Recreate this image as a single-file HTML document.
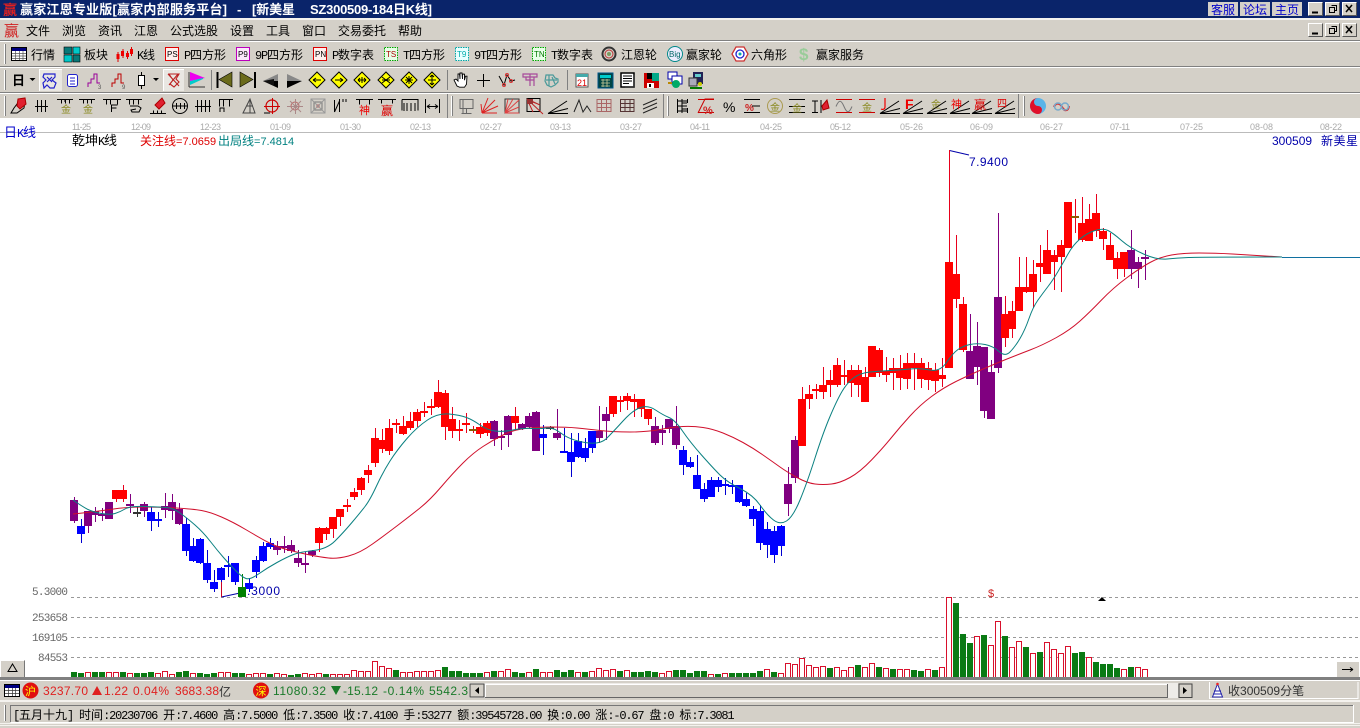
<!DOCTYPE html>
<html lang="zh"><head><meta charset="utf-8"><title>赢家江恩专业版</title>
<style>
html,body{margin:0;padding:0;background:#fff;overflow:hidden}
svg{display:block}
text{font-family:"Liberation Sans","WenQuanYi Zen Hei","Noto Sans CJK SC",sans-serif;font-size:12px;fill:#000;white-space:pre}
.l{font-family:"Liberation Mono",monospace;font-size:12px;letter-spacing:-1.2px}
.s{font-family:"Liberation Sans",sans-serif;font-size:11px}
.n{font-family:"Liberation Sans",sans-serif;font-size:12px}
.d{font-family:"Liberation Sans",sans-serif;font-size:9px;fill:#aaa}
.t{font-size:13px;font-weight:bold;fill:#fff}
.b{fill:#00c}
.v{font-family:"Liberation Mono",monospace;font-size:11px;fill:#666}
.i{font-family:"Liberation Sans",sans-serif;font-size:8px}
</style></head><body>
<svg width="1360" height="728" viewBox="0 0 1360 728" xmlns="http://www.w3.org/2000/svg" xmlns:xlink="http://www.w3.org/1999/xlink">
<defs>
<g id="fan" fill="none" stroke="#000"><path d="M-10 7.500H10M-10 7.500L9-5M-10 7.500L10 2.500"/></g>
<g id="dia"><path d="M0-8L8 0L0 8L-8 0Z" fill="#ff0" stroke="#000"/></g>
<g id="btn"><rect width="15" height="14" fill="#d4d0c8"/><path d="M.5 13.500V.5H14.500" stroke="#fff" fill="none"/><path d="M.5 13.500H14.500V.5" stroke="#555" fill="none"/></g>
</defs>
<rect width="1360" height="728" fill="#d4d0c8"/>
<!-- title bar -->
<rect width="1360" height="18" fill="#0a246a"/>
<rect y="18" width="1360" height="2" fill="#f4f2ee"/>
<rect x="3" y="2" width="14" height="14" fill="#0a246a"/>
<text x="3" y="15" style="font-size:14px;fill:#e02020;font-weight:bold">赢</text>
<text x="20" y="14" class="t" textLength="207">赢家江恩专业版[赢家内部服务平台]</text>
<text x="237" y="14" class="t">-</text>
<text x="252" y="14" class="t" textLength="43">[新美星</text>
<text x="310" y="14" class="t" textLength="122">SZ300509-184日K线]</text>
<g>
<rect x="1208" y="2" width="30" height="14" fill="#d4d0c8"/><rect x="1240" y="2" width="30" height="14" fill="#d4d0c8"/><rect x="1272" y="2" width="30" height="14" fill="#d4d0c8"/>
<text x="1211" y="14" class="b">客服</text><text x="1243" y="14" class="b">论坛</text><text x="1275" y="14" class="b">主页</text>
</g>
<g id="winb"><use xlink:href="#btn" x="1308" y="2"/><use xlink:href="#btn" x="1325" y="2"/><use xlink:href="#btn" x="1342" y="2"/>
<path d="M1312 12.500h6" stroke="#000" stroke-width="2"/><path d="M1331.500 5.500h5v5h-2M1329.500 7.500h5v5h-5z" fill="none" stroke="#000"/><path d="M1346 5l6 7M1352 5l-6 7" stroke="#000" stroke-width="1.500"/></g>
<use xlink:href="#winb" y="21"/>
<!-- menu -->
<text x="4" y="36" style="font-size:15px;fill:#d02020">赢</text>
<text x="26" y="35">文件</text><text x="62" y="35">浏览</text><text x="98" y="35">资讯</text><text x="134" y="35">江恩</text><text x="170" y="35">公式选股</text><text x="230" y="35">设置</text><text x="266" y="35">工具</text><text x="302" y="35">窗口</text><text x="338" y="35">交易委托</text><text x="398" y="35">帮助</text>
<!-- separators -->
<g fill="#808080"><rect y="40" width="1360" height="1"/><rect y="66" width="1360" height="1"/><rect y="92" width="1360" height="1"/></g>
<g fill="#fff"><rect y="41" width="1360" height="1"/><rect y="67" width="1360" height="1"/><rect y="93" width="1360" height="1"/></g>
<g fill="#fff"><rect x="4" y="44" width="1" height="20"/><rect x="4" y="70" width="1" height="20"/><rect x="4" y="96" width="1" height="20"/><rect x="451" y="96" width="1" height="20"/><rect x="667" y="96" width="1" height="20"/><rect x="1023" y="96" width="1" height="20"/></g>
<g fill="#808080"><rect x="5" y="44" width="1" height="20"/><rect x="5" y="70" width="1" height="20"/><rect x="5" y="96" width="1" height="20"/><rect x="452" y="96" width="1" height="20"/><rect x="668" y="96" width="1" height="20"/><rect x="1024" y="96" width="1" height="20"/><rect x="211" y="70" width="1" height="20"/><rect x="447" y="70" width="1" height="20"/><rect x="567" y="70" width="1" height="20"/><rect x="447" y="94" width="1" height="24"/><rect x="663" y="94" width="1" height="24"/><rect x="1018" y="94" width="1" height="24"/></g>
<!-- toolbar 2 -->
<rect x="11.500" y="47.500" width="15" height="13" fill="#fff" stroke="#000"/><rect x="12" y="48" width="14" height="3" fill="#000080"/><path d="M12 53.500h14M12 56h14M12 58.500h14M15.500 51v9M19.500 51v9M23 51v9" stroke="#555" stroke-width=".7"/>
<text x="31" y="59">行情</text>
<g stroke="#000" stroke-width=".6"><rect x="64" y="47" width="8" height="7" fill="#087878"/><rect x="73" y="47" width="7" height="7" fill="#00c8c8"/><rect x="64" y="55" width="8" height="7" fill="#00c8c8"/><rect x="73" y="55" width="7" height="7" fill="#087878"/></g>
<text x="84" y="59">板块</text>
<path d="M118 52v10M123 49v9M127.500 51v8M131.500 47v9" stroke="#d00" /><path d="M116.500 54h3v5h-3zM121 51h3v5h-3zM126 53h3v4h-3zM130 49h3v5h-3z" fill="#e00"/>
<text x="137" y="59"><tspan class="l">K</tspan>线</text>
<g fill="#fff0ee"><rect x="165.500" y="47.500" width="13" height="13" stroke="#d00"/><rect x="236.500" y="47.500" width="13" height="13" stroke="#b0b" fill="#fbe8fb"/><rect x="313.500" y="47.500" width="13" height="13" stroke="#d00"/><rect x="384.500" y="47.500" width="13" height="13" stroke="#0a0" stroke-dasharray="1.500 1" fill="#e8ffe8"/><rect x="455.500" y="47.500" width="13" height="13" stroke="#0aa" stroke-dasharray="1.500 1" fill="#e8ffff"/><rect x="532.500" y="47.500" width="13" height="13" stroke="#0a0" stroke-dasharray="1.500 1" fill="#e8ffe8"/></g>
<text x="167" y="57" class="i">PS</text><text x="238" y="57" class="i">P9</text><text x="315" y="57" class="i">PN</text><text x="386" y="57" class="i" style="fill:#a00">TS</text><text x="457" y="57" class="i" style="fill:#0aa">T9</text><text x="534" y="57" class="i" style="fill:#070">TN</text>
<text x="184" y="59"><tspan class="l">P</tspan>四方形</text>
<text x="255" y="59"><tspan class="l">9P</tspan>四方形</text>
<text x="332" y="59"><tspan class="l">P</tspan>数字表</text>
<text x="403" y="59"><tspan class="l">T</tspan>四方形</text>
<text x="474" y="59"><tspan class="l">9T</tspan>四方形</text>
<text x="551" y="59"><tspan class="l">T</tspan>数字表</text>
<circle cx="609" cy="54" r="6.500" fill="none" stroke="#333" stroke-width="2"/><circle cx="609" cy="54" r="4" fill="none" stroke="#b33"/><circle cx="609" cy="54" r="2" fill="#7a9a60"/>
<text x="621" y="59">江恩轮</text>
<circle cx="675" cy="54" r="7.500" fill="#eef" stroke="#088"/><text x="669" y="57" class="i" style="fill:#066">Big</text>
<text x="686" y="59">赢家轮</text>
<path d="M736 47h8l4 7l-4 7h-8l-4-7z" fill="#fff" stroke="#c33" stroke-width="1.300"/><circle cx="740" cy="54" r="4" fill="none" stroke="#22c" stroke-width="1.300"/><circle cx="740" cy="54" r="1.500" fill="#0aa"/>
<text x="751" y="59">六角形</text>
<text x="799" y="60" style="font-size:17px;font-weight:bold;fill:#9c9;font-family:'Liberation Sans',sans-serif">$</text>
<text x="816" y="59">赢家服务</text>
<!-- toolbar 3 -->
<text x="12" y="85" style="font-size:13px;font-weight:bold">日</text>
<path d="M29.500 78h6l-3 3zM153 78h6l-3 3z" fill="#000"/>
<rect x="39" y="69" width="23" height="22" fill="#e9e7e2"/><path d="M39.500 91V69.500H62" stroke="#fff" fill="none"/>
<path d="M44 74h11v3l-3 3 4 3-2 5h-4l-3-3-3 3-1-5 3-3-3-3z M47 77l5 5M52 77l-5 5" fill="none" stroke="#22c" stroke-width="1.200"/>
<rect x="67.500" y="74.500" width="10" height="12" rx="2" fill="#fff" stroke="#22c"/><path d="M70 78h5M70 81h5M70 84h5" stroke="#22c"/>
<path d="M88 87v-4h3v-4h3v-5h3v9h3" fill="none" stroke="#909" /><text x="98" y="89" class="i" style="font-size:6px;fill:#555">3</text>
<path d="M112 87v-4h3v-4h3v-5h3v9h3" fill="none" stroke="#b00"/><text x="122" y="89" class="i" style="font-size:6px;fill:#555">9</text>
<path d="M141.500 72v4M141.500 85v4" stroke="#000"/><rect x="138.500" y="75.500" width="6" height="10" fill="#fff" stroke="#000"/>
<rect x="163" y="69" width="21" height="22" fill="#e9e7e2"/><path d="M163.500 91V69.500H184" stroke="#fff" fill="none"/>
<path d="M168 74l11 12M178 74l-9 11M169 74h10l-3 5 3 3-5 5-4-3 3-4z" fill="none" stroke="#b22" stroke-width="1.100"/>
<path d="M189 72v15M189 87h16" stroke="#333"/><path d="M190 72l15 6l-15 3z" fill="#e0e"/><path d="M190 81l13-3v1l-13 6z" fill="#0cc"/>
<path d="M217.500 72v16" stroke="#000" stroke-width="2"/><path d="M232 72v15l-13-7.500z" fill="#6b6b1c" stroke="#000" stroke-width=".6"/>
<path d="M255 72v16" stroke="#000" stroke-width="2"/><path d="M240 72v15l13-7.500z" fill="#6b6b1c" stroke="#000" stroke-width=".6"/>
<path d="M263 81l15-7v7z" fill="#888"/><path d="M263 81l15 7v-7z" fill="#000"/><path d="M263 81l11-2v7z" fill="#111"/>
<path d="M302 81l-15-7v7z" fill="#888"/><path d="M302 81l-15 7v-7z" fill="#000"/>
<g stroke="#000" fill="none"><use xlink:href="#dia" x="317" y="80"/><use xlink:href="#dia" x="339" y="80"/><use xlink:href="#dia" x="362" y="80"/><use xlink:href="#dia" x="386" y="80"/><use xlink:href="#dia" x="409" y="80"/><use xlink:href="#dia" x="432" y="80"/>
<path d="M313 80h8M313 80l3-2M313 80l3 2M335 80h8M343 80l-3-2M343 80l-3 2M358 80h8M358 80l2-2M358 80l2 2M366 80l-2-2M366 80l-2 2M362 77v6M382 77l8 6M390 77l-8 6M382 80h8M405 80h8M409 76v8M406 77l6 6M412 77l-6 6M432 75v10M432 75l-2 2M432 75l2 2M432 85l-2-2M432 85l2-2M428 80h8"/></g>
<path d="M457 86l-3-6 2-1 2 2v-7l1.500 0 .5 5v-6l2 0 .5 6v-5l2 .2v6l1-4h1.500l-.5 8-2 3h-5z" fill="#fff" stroke="#000" stroke-width=".9"/>
<path d="M483.500 74v13M477 80.500h13" stroke="#000"/>
<path d="M499 76l5 9 3-10 4 6 4-1" fill="none" stroke="#000"/><circle cx="504" cy="85" r="1.500" fill="none" stroke="#d33"/><circle cx="507" cy="75" r="1.500" fill="none" stroke="#d33"/><circle cx="511" cy="81" r="1.500" fill="none" stroke="#d33"/>
<path d="M523 74h14v3h-14zM526 77v3h8v-3M526 80h8v6M530 74v12" fill="none" stroke="#a74a9a" stroke-width="1.200"/>
<path d="M546 75h7l2 3 3 1v3l-3 3-4 2-4-2-2-4z M549 75v11M546 80h11M552 77l3 7" fill="none" stroke="#4a9a9a" stroke-width="1.200"/>
<rect x="576" y="74" width="12" height="13" fill="#fff" stroke="#555"/><rect x="576" y="74" width="12" height="3" fill="#4aa"/><text x="577" y="86" class="i" style="font-size:9px;fill:#d00">21</text>
<rect x="598" y="73" width="15" height="15" fill="#044" stroke="#058"/><rect x="600" y="75" width="11" height="3" fill="#0cc"/><path d="M601 80h9M601 83h9M601 86h9M603 79v8M607 79v8" stroke="#cc9" stroke-width=".8"/>
<rect x="621" y="73" width="13" height="14" fill="#fff" stroke="#000" stroke-width="1.500"/><path d="M623 76h9M623 78.500h9M623 81h9M623 83.500h6" stroke="#000"/><path d="M634 75v12h-9" fill="none" stroke="#333" stroke-width="1.500"/>
<rect x="644" y="73" width="15" height="15" fill="#c00"/><rect x="652" y="73" width="7" height="8" fill="#0a8"/><rect x="647" y="83" width="7" height="5" fill="#fff"/><rect x="649" y="84" width="2" height="3" fill="#000"/><rect x="647" y="73" width="5" height="6" fill="#000"/>
<rect x="668" y="72" width="9" height="7" fill="#fff" stroke="#00a"/><rect x="672" y="76" width="10" height="8" fill="#fff" stroke="#00a"/><circle cx="676" cy="84" r="4" fill="#0a6"/><path d="M668 83h4" stroke="#b80" stroke-width="2"/>
<rect x="693" y="72" width="10" height="12" fill="#225" /><rect x="695" y="74" width="6" height="3" fill="#6cc"/><rect x="689" y="78" width="8" height="8" fill="#aab" stroke="#333"/><path d="M690 88h12" stroke="#070" stroke-width="2"/><circle cx="700" cy="84" r="2" fill="#cc0"/>
<!-- toolbar 4 -->
<g fill="none" stroke="#000">
<path d="M11 113l3-5 6-8 5 1-1 7-7 5z M12 113h-1" /><path d="M18 99l7-1 1 6-6 5-3-3z" fill="#e02030" stroke="#a00"/>
<path d="M37.500 100v12M41.500 100v12M45.500 100v12M35 106.500h13"/>
<path d="M57 99.500h16M61.500 99.500v4M65.500 99.500v4M69.500 99.500v4M65 100v2"/><path d="M79 99.500h16M83.500 99.500v4M87.500 99.500v4M91.500 99.500v4"/>
<path d="M103 99.500h18M106.500 99.500v5M110.500 99.500v5M117.500 99.500v5M111.500 112v-7h6M111.500 108h5"/>
<path d="M126 99.500h16M129.500 99.500v5M133.500 99.500v5M138.500 99.500v5M130 106h8l3 2-2 4-7 0-1-2 5-1"/>
<path d="M150 113.500h16M153.500 113.500v-3M157.500 113.500v-3M161.500 113.500v-3"/><path d="M155 105l7-7 3 5-6 6z" fill="#e02030" stroke="#a00"/>
<circle cx="180" cy="106" r="7.500"/><path d="M173 106h14M176.500 103v6M180.500 103v6M184.500 103v6"/>
<path d="M197.500 100v12M201.500 100v12M205.500 100v12M209.500 100v12M195 106.500h16"/>
<path d="M219.500 99.500v7M223.500 99.500v7M219 99.500h14M229.500 99.500v7M220 112v-4h4v4"/>
<path d="M243 113l7-14 5 14zM250 99v14M247 106h6" stroke="#444"/>
<circle cx="272" cy="106" r="6" stroke="#c00" stroke-width="1.200"/><path d="M264 106.500h16M272.500 98v16" stroke="#c00"/><path d="M270 113h-6" stroke="#000"/>
<circle cx="295" cy="106" r="4" stroke="#b66"/><path d="M287 106.500h16M295.500 99v15M290 101l11 11M301 101l-11 11" stroke="#a88"/>
<rect x="311" y="99" width="14" height="14" stroke="#999"/><rect x="314" y="102" width="8" height="8" stroke="#777"/><rect x="316.500" y="104.500" width="3" height="3" fill="#c33" stroke="none"/><path d="M311 99l14 14M325 99l-14 14" stroke="#999"/>
<path d="M334.500 112v-12M334.500 112l5-11M339.500 112v-13M343 99v3M346 99v3"/>
<path d="M356 99.500h17M359.500 99.500v5M369.500 99.500v5"/>
<path d="M378 99.500h18M381.500 99.500v4M392.500 99.500v4"/>
<path d="M402 99.500h16v11M404 103v8M407 103v8M411 103v8M415 103v8M402 99.500v11"/>
<path d="M425.500 99v14M439.500 99v14M427 106.500h11M427 106.500l3-2M427 106.500l3 2M438 106.500l-3-2M438 106.500l-3 2"/>
<path d="M460 99.500h13v9h-13zM466.500 108.500v5M461.500 113.500h10M463 99v14" stroke="#666"/>
<path d="M482 113l13-13M482 113l16-7M482 113l6-15M482 113l-1-9M482 113h15" stroke="#d22"/>
<rect x="505" y="99" width="14" height="14" stroke="#333"/><path d="M505 113l14-13M505 113l14-6M505 113l8-14M505 113l3-14M505 113h14" stroke="#d44"/>
<rect x="527" y="98.500" width="13" height="13" stroke="#000"/><path d="M527 99l16 15M527 99l13 6M527 99l6 13M530 101l8 3" stroke="#b22"/><path d="M527 99h6v5h-6z" fill="#933" stroke="none"/>
<use xlink:href="#fan" x="558" y="106"/>
<path d="M574 112l5-12 4 12 4-6 4 6" stroke="#222"/>
<path d="M597 99.500h14M597 103.500h14M597 107.500h14M597 111.500h14M597 99v13M601.500 99v13M606.500 99v13M611 99v13" stroke="#a66"/>
<path d="M620 99.500h14M620 103.500h14M620 107.500h14M620 111.500h14M620.500 99v13M625 99v13M630 99v13M634 99v13" stroke="#533"/>
<path d="M643 105l14-6M643 109l14-6M643 113l14-6" stroke="#222"/>
<path d="M677.500 99v14M682 99v14M677 101h10M677 106h10M677 111h10M687.500 99v4M687.500 108v5M682 103h5M682 109h5"/>
<path d="M698 113l7-14h9" stroke="#c00"/><path d="M698 99.500h16M698 112.500h16" stroke="#c00"/>
<path d="M744 99.500h16M744 112.500h16M752 106h8" stroke="#000"/>
<path d="M789 99.500h16M789 106.500h16M789 112.500h16" stroke="#000"/>
<circle cx="775" cy="106" r="7.500" stroke="#aa9a50"/>
<path d="M815 101.500v11M812 101h6M812 112.500h6M821 100v13"/><path d="M822 106l5-6 2 8-6 2z" fill="#e02030" stroke="#a00"/>
<path d="M836 99.500h16M836 112.500h16" stroke="#c00"/><path d="M836 106.500c3-7 5-7 8 0s5 7 8 0" stroke="#777"/>
<path d="M859 99.500h16M859 112.500h16" stroke="#c00"/>
</g>
<text x="703" y="114" style="font-size:11px;fill:#c22;font-family:'Liberation Sans',sans-serif;font-weight:bold">%</text>
<text x="723" y="112" style="font-size:14px;font-family:'Liberation Sans',sans-serif">%</text>
<text x="745" y="111" style="font-size:10px;fill:#c22;font-family:'Liberation Sans',sans-serif;font-weight:bold">%</text>
<g>
<text x="61" y="113" style="font-size:10px;fill:#8a8a20">金</text><text x="83" y="113" style="font-size:10px;fill:#8a8a20">金</text>
<text x="770" y="111" style="font-size:10px;fill:#8a8a20">金</text><text x="792" y="112" style="font-size:10px;fill:#8a8a20">金</text>
<text x="862" y="111" style="font-size:10px;fill:#8a8a20">金</text>
<text x="931" y="108" style="font-size:10px;fill:#8a8a20">金</text>
</g>
<text x="359" y="114" style="font-size:11px;fill:#e00">神</text>
<text x="381" y="115" style="font-size:12px;fill:#d00">赢</text>
<g id="fans"><use xlink:href="#fan" x="890" y="106"/><use xlink:href="#fan" x="913" y="106"/><use xlink:href="#fan" x="937" y="106"/><use xlink:href="#fan" x="960" y="106"/><use xlink:href="#fan" x="982" y="106"/><use xlink:href="#fan" x="1005" y="106"/></g>
<path d="M885 98v9c0 2-2 3-4 2" fill="none" stroke="#e00" stroke-width="1.200"/>
<text x="905" y="109" style="font-size:14px;font-weight:bold;fill:#e00;font-family:'Liberation Sans',sans-serif">F</text>
<text x="951" y="108" style="font-size:11px;fill:#e00">神</text><text x="974" y="109" style="font-size:12px;fill:#d00">赢</text><text x="997" y="107" style="font-size:10px;fill:#d00">四</text>
<circle cx="1038" cy="106" r="8" fill="#5ab4e8"/><path d="M1038 98a8 8 0 0 0 0 16a4 4 0 0 0 0-8a4 4 0 0 1 0-8z" fill="#e0102a"/><circle cx="1038" cy="102" r="1.500" fill="#5ab4e8"/><circle cx="1038" cy="110" r="1.500" fill="#e0102a"/>
<path d="M1054 107c2-5 6-4 8 0s6 5 7-1" fill="none" stroke="#d22" stroke-width="2"/><circle cx="1058" cy="106.500" r="3.500" fill="none" stroke="#7ac" stroke-width="1.500"/><circle cx="1065" cy="106.500" r="3.500" fill="none" stroke="#7ac" stroke-width="1.500"/>
<!-- chart bg -->
<rect y="118" width="1360" height="559" fill="#fff"/>
<rect y="132" width="1360" height="1" fill="#bbb"/>
<g>
<text class="d" x="72" y="130" textLength="19">11-25</text><text class="d" x="131" y="130" textLength="20">12-09</text><text class="d" x="200" y="130" textLength="21">12-23</text><text class="d" x="270" y="130" textLength="21">01-09</text><text class="d" x="340" y="130" textLength="21">01-30</text><text class="d" x="410" y="130" textLength="21">02-13</text><text class="d" x="480" y="130" textLength="22">02-27</text><text class="d" x="550" y="130" textLength="21">03-13</text><text class="d" x="620" y="130" textLength="22">03-27</text><text class="d" x="690" y="130" textLength="20">04-11</text><text class="d" x="760" y="130" textLength="22">04-25</text><text class="d" x="830" y="130" textLength="21">05-12</text><text class="d" x="900" y="130" textLength="23">05-26</text><text class="d" x="970" y="130" textLength="23">06-09</text><text class="d" x="1040" y="130" textLength="23">06-27</text><text class="d" x="1110" y="130" textLength="20">07-11</text><text class="d" x="1180" y="130" textLength="23">07-25</text><text class="d" x="1250" y="130" textLength="23">08-08</text><text class="d" x="1320" y="130" textLength="22">08-22</text>
</g>
<text x="4" y="137" style="fill:#00c;font-size:13px">日<tspan class="l" style="fill:#00c">K</tspan>线</text>
<text x="72" y="145" style="font-size:13px">乾坤<tspan class="l">K</tspan>线</text>
<text x="140" y="145" style="fill:#d00">关注线<tspan class="s" style="fill:#d00">=7.0659</tspan></text>
<text x="218" y="145" style="fill:#008080">出局线<tspan class="s" style="fill:#008080">=7.4814</tspan></text>
<text x="1272" y="145" class="n" style="fill:#00a">300509</text>
<text x="1321" y="145" style="fill:#00a" textLength="37">新美星</text>
<!-- grid -->
<g stroke="#999" stroke-dasharray="3 3"><path d="M71 597.500H1360M71 617.500H1360M71 637.500H1360M71 657.500H1360"/></g>
<text class="v" x="32" y="595" textLength="36">5.3000</text><text class="v" x="32" y="621" textLength="36">253658</text><text class="v" x="32" y="641" textLength="36">169105</text><text class="v" x="38" y="661" textLength="30">84553</text>
<!-- high/low labels -->
<text x="247" y="595" class="n" style="fill:#00a" textLength="33">.3000</text>
<text x="969" y="166" class="n" style="fill:#00a" textLength="39">7.9400</text>
<path d="M949.500 150.500L969 155M221.500 597L240 593" stroke="#00a" fill="none"/>
<path d="M221.500 580V597" stroke="#c02"/>
<!-- wicks -->
<g fill="none">
<path stroke="#800080" d="M74.500 497V523M88.500 511V533M95.500 507V522M102.500 508V521M109.500 502V519M130.500 494V513M144.500 502V517M165.500 493V518M172.500 494V520M179.500 503V525M277.500 541V555M284.500 536V553M291.500 540V553M298.500 550V567M305.500 552V573M312.500 550V557M494.500 420V446M501.500 430V450M508.500 415V447M522.500 423V430M529.500 413V428M536.500 411V451M557.500 409V440M599.500 406V443M606.500 407V440M655.500 417V445M662.500 425V445M669.500 419V433M676.500 406V449M788.500 467V516M795.500 436V483M970.500 314V379M977.500 322V385M984.500 347V418M991.500 360V419M998.500 213V373M1131.500 230V279M1138.500 257V288M1145.500 250V280"/>
<path stroke="#e8001c" d="M116.500 490V502M123.500 485V502M319.500 527V552M326.500 527V540M333.500 517V538M340.500 509V526M347.500 499V512M354.500 488V500M361.500 477V495M368.500 465V483M375.500 428V467M382.500 429V453M389.500 419V455M396.500 419V433M403.500 416V435M410.500 412V430M417.500 409V427M424.500 402V417M431.500 399V415M438.500 380V408M445.500 390V440M452.500 407V438M459.500 420V441M466.500 413V433M473.500 426V433M480.500 423V438M487.500 421V436M515.500 407V430M613.500 396V417M620.500 396V412M627.500 393V410M634.500 394V417M641.500 399V417M648.500 409V425M802.500 387V446M809.500 385V409M816.500 384V399M823.500 367V399M830.500 370V397M837.500 358V387M844.500 360V385M851.500 365V397M858.500 365V397M865.500 367V402M872.500 346V377M879.500 348V377M886.500 357V382M893.500 358V390M900.500 355V390M907.500 353V389M914.500 353V390M921.500 358V388M928.500 362V390M935.500 363V392M942.500 358V387M949.500 150V368M956.500 235V308M963.500 297V352M1005.500 296V347M1012.500 301V338M1019.500 257V311M1026.500 257V293M1033.500 260V308M1040.500 245V282M1047.500 230V274M1054.500 250V290M1061.500 240V292M1068.500 202V248M1075.500 199V233M1082.500 197V242M1089.500 204V241M1096.500 194V237M1103.500 228V250M1110.500 233V260M1117.500 252V279M1124.500 252V277"/>
<path stroke="#0000d0" d="M81.500 519V543M151.500 507V531M158.500 512V527M186.500 518V556M193.500 538V562M200.500 538V564M207.500 550V583M214.500 570V592M221.500 567V582M228.500 556V577M235.500 563V585M249.500 578V592M256.500 556V578M263.500 542V562M270.500 538V549M543.500 425V455M564.500 428V453M571.500 433V477M578.500 433V458M585.500 438V462M592.500 431V453M683.500 446V475M690.500 457V468M697.500 455V489M704.500 483V502M711.500 477V497M718.500 477V492M725.500 478V495M732.500 480V494M739.500 485V503M746.500 493V507M753.500 506V526M760.500 505V550M767.500 522V558M774.500 526V563M781.500 525V556"/>
<path stroke="#333" d="M137.500 507V517M550.500 426V430"/>
<path stroke="#008000" d="M242.500 574V597"/>
</g>
<!-- bodies -->
<g fill="none" stroke-width="8">
<path stroke="#800080" d="M74 500V521M88 511V526M95 511V515M102 514V516M109 502V519M130 504V506M144 504V511M165 506V510M172 502V511M179 509V524M277 546V550M284 546V548M291 545V551M298 558V563M305 563V565M312 551V555M494 421V439M501 436V438M508 416V435M522 424V429M529 416V427M536 412V451M557 433V438M599 431V438M606 414V421M655 426V443M662 430V433M669 419V429M676 426V445M788 484V504M795 440V478M970 351V379M977 346V367M984 347V411M991 372V419M998 297V368M1131 250V269M1138 262V269M1145 257V259"/>
<path stroke="#f00" d="M116 490V499M123 490V499M319 528V543M326 528V534M333 517V529M340 509V517M347 505V507M354 492V497M361 478V490M368 470V475M375 438V463M382 440V449M389 428V451M396 423V425M403 426V434M410 421V428M417 412V421M424 411V413M431 406V408M438 392V407M445 393V427M452 419V431M459 429V431M466 423V425M480 427V434M487 423V433M515 416V423M613 396V414M620 400V402M627 396V401M634 399V402M641 399V409M648 409V419M802 399V446M809 394V399M816 389V391M823 385V392M830 380V385M837 365V385M844 375V377M851 370V383M858 370V385M865 377V402M872 346V377M879 350V373M886 371V375M893 368V373M900 368V378M907 363V379M914 363V368M921 363V379M928 368V380M935 370V381M942 375V379M949 262V368M956 274V299M963 304V350M1005 314V338M1012 311V329M1019 287V311M1026 287V292M1033 274V292M1040 263V267M1047 250V274M1054 255V262M1061 245V257M1068 202V248M1082 223V240M1089 219V241M1096 213V231M1103 231V239M1110 245V260M1117 258V269M1124 252V269"/>
<path stroke="#00f" d="M81 526V534M151 512V521M158 519V521M186 524V551M193 546V561M200 539V563M207 563V580M214 582V589M221 568V580M228 565V567M235 563V582M249 583V589M256 560V572M263 546V561M270 543V547M543 434V438M564 451V453M571 452V462M578 441V457M585 448V458M592 431V448M683 450V465M690 462V467M697 475V489M704 489V499M711 480V497M718 480V487M725 484V486M732 485V487M739 485V502M746 499V506M753 509V519M760 511V543M767 529V545M774 531V555M781 526V546"/>
<path stroke="#333" d="M137 512V514M550 427V429"/>
<path stroke="#8a5a00" d="M473 429V431M1075 216V218"/>
<path stroke="#008000" d="M242 587V597"/>
</g>
<!-- MAs -->
<path fill="none" stroke="#d0102c" stroke-linejoin="round" d="M73 514Q93 512 110 509.500T143.500 507T176.500 508T201.500 510.500T221.500 517T246.500 530T268.500 542.500T288.500 550T310 555T328.500 558T348.500 556T372.500 544T397.500 525.500T420 508T441.500 486.500T463 463T483 446.500T503 435T525 428.500T552 427T577 428T600 430.500T630 432T660 429.500T683 426.500T703 427.500T723 433T743 442.500T763 455T780 467T797 477.500T815 484T831.500 484T850 477.500T871.500 460T891.500 437.500T910 416T931.500 396.500T955 382T982 369.500T1007 359T1030 350T1056.500 337.500T1080 321T1101.500 300T1126.500 278T1150 262.500T1171.500 255T1199 253T1232.500 254T1282 257"/>
<path fill="none" stroke="#0a8080" stroke-linejoin="round" d="M73 500Q83 507 88 509.500T101.500 513.500T115 513.500T125 509T145 506.500T166.500 507.500T180 513T195 525T210 541T223.500 557.500T236 571T246 578.500T258.500 574T277 562.500T293.500 554.500T313.500 550.500T335 541T351.500 523T365 506.500T376.500 486T390 461T407 438.500T427.500 420T449 414T466.500 417.500T480 425T495 431T513 430T531.500 428.500T546.500 428T561.500 433.500T585 442.500T606.500 438.500T623 421T640.500 407.500T655.500 410T669 417.500T682.500 431T701.500 455T720 475T740 488.500T760 505T773.500 520T786.500 521T800 500T815 458T830 416.500T842 391.500T853.500 378T870 372T890 370.500T910 369T930 370T946.500 362.500T958 349.500T970 344.500T985 344.500T999 351.500T1010 352T1020 338.500T1029 318.500T1038 300T1048 286.500T1058 271.500T1068 254T1080 239T1095 230.500T1108 230.500T1121.500 240.500T1143.500 254T1167 259T1188.500 257.500T1282 257"/>
<path fill="none" stroke="#1070a0" d="M1282 257.500H1360"/>
<text x="988" y="597" style="font-size:11px;fill:#c22;font-family:'Liberation Sans',sans-serif">$</text>
<path d="M1098 601l4-4 4 4z" fill="#000"/>
<!-- volume green -->
<path fill="none" stroke="#0a7a14" stroke-width="6" d="M74 672V678M81 673V678M95 672V678M102 672V678M123 672V678M137 673V678M144 673V678M151 672V678M179 672V678M186 671V678M200 673V678M207 674V678M214 673V678M235 673V678M242 673V678M270 674V678M291 675V678M298 674V678M326 674V678M396 670V678M445 667V678M452 671V678M459 671V678M466 673V678M473 673V678M480 673V678M494 671V678M515 672V678M522 673V678M536 669V678M557 670V678M564 672V678M571 670V678M585 672V678M620 671V678M634 672V678M641 672V678M648 671V678M655 672V678M676 670V678M683 670V678M690 673V678M697 671V678M704 671V678M718 674V678M732 673V678M739 673V678M746 673V678M753 673V678M760 671V678M774 672V678M830 668V678M858 665V678M879 667V678M893 669V678M914 670V678M921 671V678M935 670V678M956 603V678M963 634V678M970 643V678M984 635V678M1005 636V678M1026 647V678M1040 652V678M1075 653V678M1082 652V678M1096 662V678M1103 664V678M1110 664V678M1117 668V678M1131 667V678"/>
<!-- volume red -->
<path fill="#fff" stroke="#d8102c" d="M85.500 678V672.500h5V678M106.500 678V672.500h5V678M113.500 678V672.500h5V678M127.500 678V673.500h5V678M155.500 678V673.500h5V678M162.500 678V671.500h5V678M169.500 678V674.500h5V678M190.500 678V673.500h5V678M218.500 678V672.500h5V678M225.500 678V672.500h5V678M246.500 678V674.500h5V678M253.500 678V673.500h5V678M260.500 678V673.500h5V678M274.500 678V673.500h5V678M281.500 678V674.500h5V678M302.500 678V673.500h5V678M309.500 678V674.500h5V678M316.500 678V673.500h5V678M330.500 678V674.500h5V678M337.500 678V674.500h5V678M344.500 678V674.500h5V678M351.500 678V670.500h5V678M358.500 678V671.500h5V678M365.500 678V671.500h5V678M372.500 678V661.500h5V678M379.500 678V666.500h5V678M386.500 678V668.500h5V678M400.500 678V672.500h5V678M407.500 678V672.500h5V678M414.500 678V671.500h5V678M421.500 678V671.500h5V678M428.500 678V671.500h5V678M435.500 678V670.500h5V678M484.500 678V672.500h5V678M498.500 678V671.500h5V678M505.500 678V669.500h5V678M526.500 678V672.500h5V678M540.500 678V672.500h5V678M547.500 678V672.500h5V678M575.500 678V672.500h5V678M589.500 678V671.500h5V678M596.500 678V668.500h5V678M603.500 678V670.500h5V678M610.500 678V669.500h5V678M624.500 678V670.500h5V678M659.500 678V673.500h5V678M666.500 678V671.500h5V678M708.500 678V674.500h5V678M722.500 678V673.500h5V678M764.500 678V669.500h5V678M778.500 678V673.500h5V678M785.500 678V663.500h5V678M792.500 678V664.500h5V678M799.500 678V658.500h5V678M806.500 678V665.500h5V678M813.500 678V667.500h5V678M820.500 678V666.500h5V678M834.500 678V667.500h5V678M841.500 678V670.500h5V678M848.500 678V667.500h5V678M862.500 678V667.500h5V678M869.500 678V663.500h5V678M883.500 678V668.500h5V678M897.500 678V669.500h5V678M904.500 678V669.500h5V678M925.500 678V669.500h5V678M939.500 678V667.500h5V678M946.500 678V597.500h5V678M974.500 678V636.500h5V678M988.500 678V645.500h5V678M995.500 678V621.500h5V678M1009.500 678V647.500h5V678M1016.500 678V641.500h5V678M1030.500 678V653.500h5V678M1044.500 678V642.500h5V678M1051.500 678V649.500h5V678M1058.500 678V653.500h5V678M1065.500 678V646.500h5V678M1086.500 678V657.500h5V678M1121.500 678V669.500h5V678M1135.500 678V667.500h5V678M1142.500 678V669.500h5V678"/>
<!-- side buttons -->
<rect x="0" y="660" width="25" height="17" fill="#d4d0c8"/><path d="M.5 677V660.500H24.500" stroke="#fff" fill="none"/><path d="M24.500 660.500V677" stroke="#777"/>
<path d="M8 671.500L12.500 664L17 671.500Z" fill="none" stroke="#000"/>
<rect x="1336" y="661" width="23" height="16" fill="#d4d0c8"/><path d="M1336.500 677V661.500H1359" stroke="#fff" fill="none"/>
<path d="M1342 669.500h11M1353 669.500l-3-2M1353 669.500l-3 2" stroke="#000" fill="none"/>
<!-- bottom -->
<rect y="677" width="1360" height="51" fill="#d4d0c8"/>
<rect y="677" width="1360" height="3" fill="#808080"/>
<rect y="680" width="1360" height="1" fill="#fff"/>
<rect y="700" width="1360" height="2" fill="#f4f2ee"/>
<rect y="723" width="1360" height="1" fill="#f4f2ee"/><rect y="725" width="1360" height="1" fill="#f4f2ee"/>
<!-- status 1 -->
<rect x="4.500" y="684.500" width="15" height="12" fill="#fff" stroke="#000"/><rect x="5" y="685" width="14" height="3" fill="#000080"/><path d="M5 690.500h14M5 693.500h14M8.500 688v8M12.500 688v8M15.500 688v8" stroke="#333" stroke-width=".7"/>
<circle cx="30.500" cy="690.500" r="8" fill="#e01010"/><text x="25" y="695" style="font-size:11px;fill:#ff0">沪</text>
<text x="43" y="695" class="n" style="fill:#e02020" textLength="45">3237.70</text>
<path d="M92 695l5-9 5 9z" fill="#e02020"/>
<text x="104" y="695" class="n" style="fill:#e02020" textLength="24">1.22</text>
<text x="133" y="695" class="n" style="fill:#e02020" textLength="36">0.04%</text>
<text x="175" y="695" class="n" style="fill:#e02020" textLength="44">3683.38</text>
<text x="219" y="696" style="fill:#333">亿</text>
<circle cx="261" cy="690.500" r="8" fill="#e01010"/><text x="255.500" y="695" style="font-size:11px;fill:#ff0">深</text>
<text x="273" y="695" class="n" style="fill:#1a7a2a" textLength="53">11080.32</text>
<path d="M331 686h10l-5 9z" fill="#1a7a2a"/>
<text x="343" y="695" class="n" style="fill:#1a7a2a" textLength="35">-15.12</text>
<text x="383" y="695" class="n" style="fill:#1a7a2a" textLength="41">-0.14%</text>
<text x="429" y="695" class="n" style="fill:#1a7a2a" textLength="39">5542.3</text>
<!-- scrollbar -->
<rect x="469" y="683" width="709" height="15" fill="#eeece8"/>
<rect x="470" y="684" width="14" height="13" fill="#d4d0c8" stroke="#444"/><path d="M479 687v7l-4-3.500z" fill="#000"/>
<rect x="485" y="684" width="683" height="14" fill="#d4d0c8"/><path d="M485.500 698V684.500H1168" stroke="#fff" fill="none"/><path d="M485 697.500H1167.500V684" stroke="#666" fill="none"/>
<rect x="1179" y="684" width="13" height="13.500" fill="#d4d0c8" stroke="#444"/><path d="M1183 687v7l4-3.500z" fill="#000"/>
<rect x="1209" y="682" width="149" height="17" fill="#d4d0c8"/><path d="M1209.500 699V682M1209 698.500H1358V682" stroke="#fff" fill="none"/>
<path d="M1217.500 684l-5 13h10z" fill="#fff" stroke="#22a"/><path d="M1214 691h7M1213 694h9" stroke="#22a"/><circle cx="1217.500" cy="684" r="1.300" fill="#e22"/>
<text x="1228" y="695" style="fill:#333">收<tspan class="n" style="fill:#333">300509</tspan>分笔</text>
<!-- status 2 -->
<path d="M4.500 705v16" stroke="#fff"/><path d="M5.500 705v16" stroke="#777"/>
<path d="M10.500 722V705.500H1353" stroke="#777" fill="none"/><path d="M10.500 722.500H1353.500V705" stroke="#fff" fill="none"/>
<text x="13" y="719"><tspan class="l">[</tspan>五月十九<tspan class="l">] </tspan>时间<tspan class="l">:20230706 </tspan>开<tspan class="l">:7.4600 </tspan>高<tspan class="l">:7.5000 </tspan>低<tspan class="l">:7.3500 </tspan>收<tspan class="l">:7.4100 </tspan>手<tspan class="l">:53277 </tspan>额<tspan class="l">:39545728.00 </tspan>换<tspan class="l">:0.00 </tspan>涨<tspan class="l">:-0.67 </tspan>盘<tspan class="l">:0 </tspan>标<tspan class="l">:7.3081</tspan></text>
</svg>
</body></html>
